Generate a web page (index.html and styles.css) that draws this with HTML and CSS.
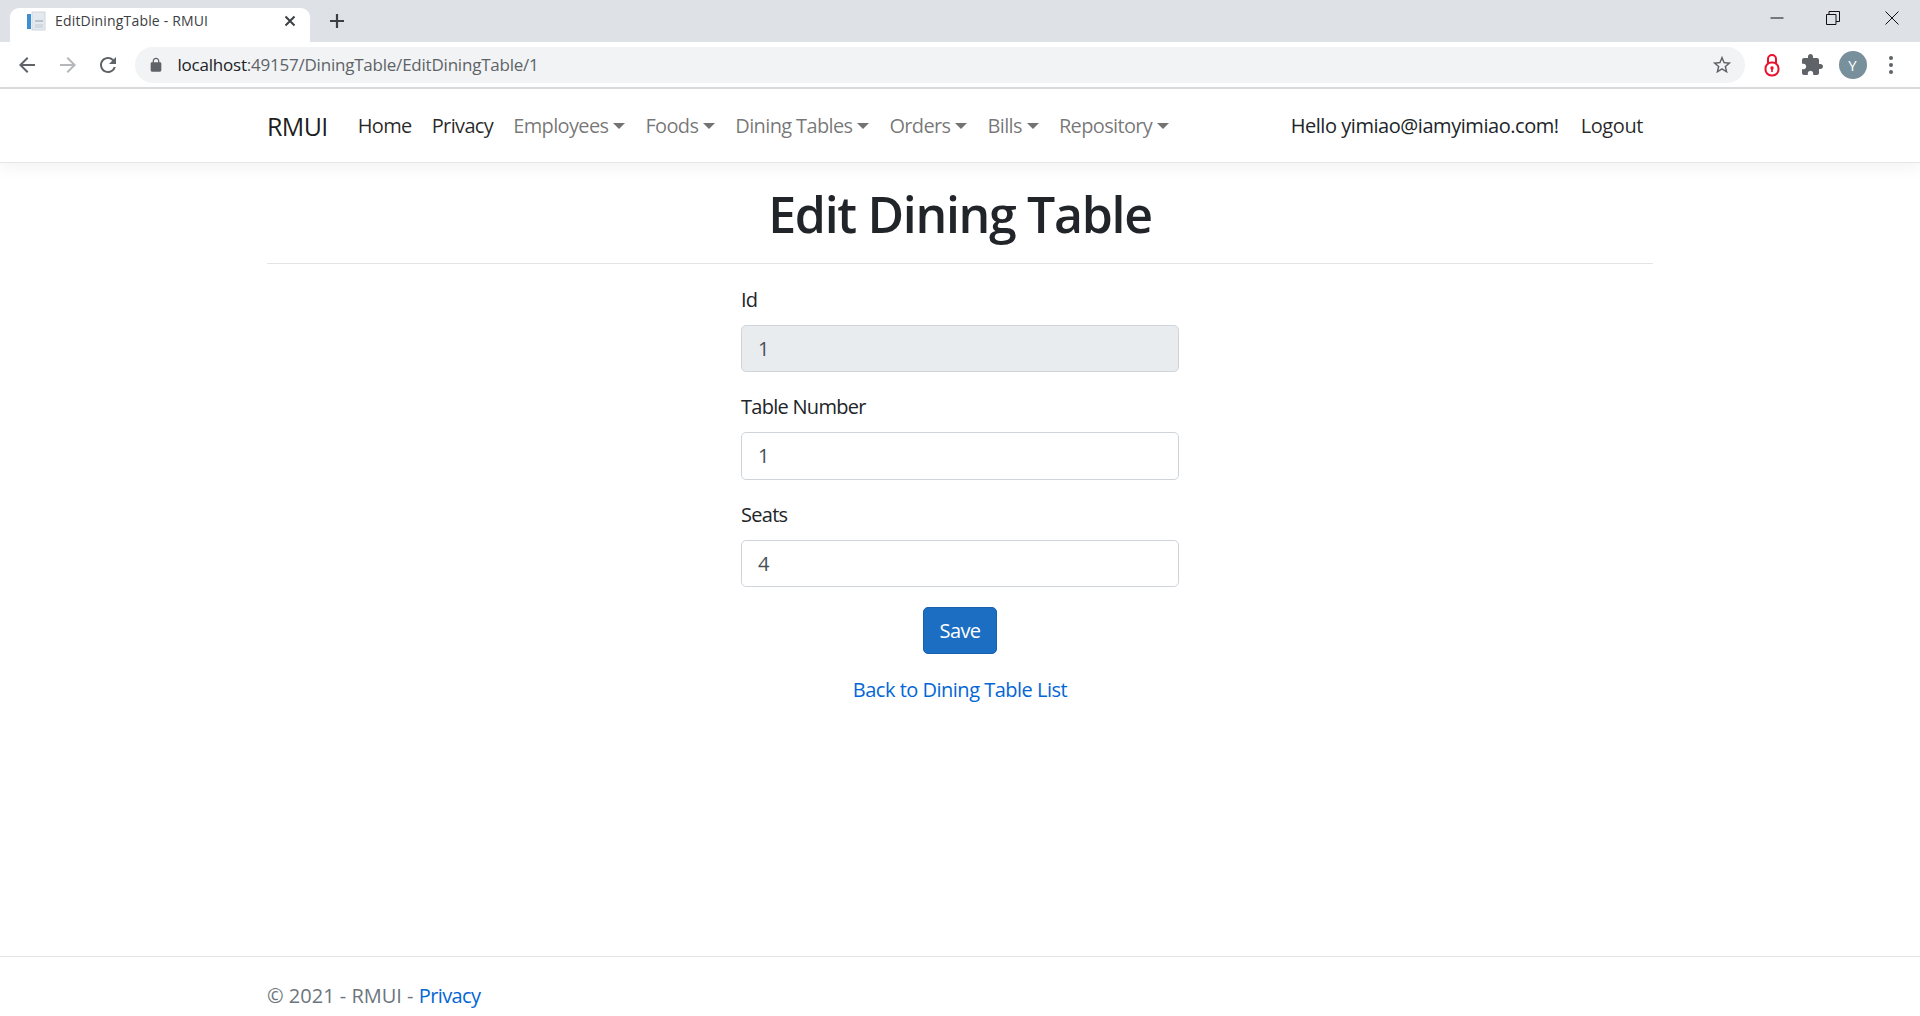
FILE: index.html
```html
<!DOCTYPE html>
<html lang="en">
<head>
<meta charset="utf-8">
<title>EditDiningTable - RMUI</title>
<link rel="stylesheet" href="styles.css">
</head>
<body>
<div class="browser">
  <div class="tabstrip">
    <div class="tab">
      <svg class="favicon" width="20" height="20" viewBox="0 0 20 20"><rect x="6" y="1" width="13" height="18" fill="#e4e9ef" stroke="#cfd6de"/><rect x="9" y="9" width="8" height="2" fill="#b9c3cd"/><rect x="9" y="13" width="8" height="4" fill="#d2d9e0"/><rect x="1" y="3" width="4" height="15" fill="#3d8fd1"/></svg>
      <span class="tab-title">EditDiningTable - RMUI</span>
      <svg class="tab-close" width="14" height="14" viewBox="0 0 14 14"><path d="M2.5 2.5l9 9M11.500 2.500l-9 9" stroke="#3c4043" stroke-width="2" fill="none"/></svg>
    </div>
    <svg class="newtab" width="20" height="20" viewBox="0 0 20 20"><path d="M10 3v14M3 10h14" stroke="#3c4043" stroke-width="2.200" fill="none"/></svg>
    <div class="winctl">
      <svg width="16" height="16" viewBox="0 0 16 16"><path d="M1.500 8h13" stroke="#111" stroke-width="1" fill="none"/></svg>
      <svg width="16" height="16" viewBox="0 0 16 16"><path d="M1.500 4.500h9.500v10h-9.500zM4 4.500v-3h10.500v10h-3.500" stroke="#111" stroke-width="1" fill="none"/></svg>
      <svg class="win-close" width="16" height="16" viewBox="0 0 16 16"><path d="M1.500 1.500l13 13M14.500 1.500l-13 13" stroke="#111" stroke-width="1" fill="none"/></svg>
    </div>
  </div>
  <div class="toolbar">
    <svg class="tool" width="24" height="24" viewBox="0 0 24 24"><path fill="#5f6368" d="M20 11H7.830l5.590-5.590L12 4l-8 8 8 8 1.410-1.410L7.830 13H20v-2z"/></svg>
    <svg class="tool" width="24" height="24" viewBox="0 0 24 24"><path fill="#b5b8bb" d="M4 11h12.170l-5.590-5.590L12 4l8 8-8 8-1.410-1.410L16.170 13H4v-2z"/></svg>
    <svg class="tool" width="24" height="24" viewBox="0 0 24 24"><path fill="#5f6368" d="M17.650 6.350A7.958 7.958 0 0 0 12 4c-4.420 0-7.990 3.580-7.990 8s3.570 8 7.990 8c3.730 0 6.840-2.550 7.730-6h-2.080A5.990 5.990 0 0 1 12 18c-3.310 0-6-2.690-6-6s2.690-6 6-6c1.660 0 3.140.690 4.220 1.780L13 11h7V4l-2.350 2.350z"/></svg>
    <div class="omnibox">
      <svg width="16" height="16" viewBox="0 0 24 24"><path fill="#5f6368" d="M18 8h-1V6c0-2.760-2.240-5-5-5S7 3.240 7 6v2H6c-1.100 0-2 .9-2 2v10c0 1.100.9 2 2 2h12c1.100 0 2-.9 2-2V10c0-1.100-.9-2-2-2zm-2.900 0H8.900V6c0-1.710 1.390-3.100 3.100-3.100 1.710 0 3.100 1.390 3.100 3.100v2z"/></svg>
      <span class="url"><span class="url-host">localhost</span>:49157/DiningTable/EditDiningTable/1</span>
      <svg class="star" width="22" height="22" viewBox="0 0 24 24"><path fill="#5f6368" d="M22 9.240l-7.190-.62L12 2 9.190 8.630 2 9.240l5.460 4.730L5.820 21 12 17.270 18.180 21l-1.630-7.030L22 9.240zM12 15.400l-3.760 2.270 1-4.280-3.320-2.880 4.380-.38L12 6.100l1.710 4.040 4.380.38-3.320 2.880 1 4.280L12 15.400z"/></svg>
    </div>
    <div class="ext">
      <svg width="24" height="24" viewBox="0 0 24 24"><rect x="5.500" y="9.500" width="13" height="13" rx="6" fill="none" stroke="#e8112d" stroke-width="2"/><path d="M8 10V6a4 4 0 0 1 8 0v4" fill="none" stroke="#e8112d" stroke-width="2"/><circle cx="12" cy="15" r="1.700" fill="#e8112d"/><rect x="11.200" y="15" width="1.600" height="4" fill="#e8112d"/></svg>
      <svg width="24" height="24" viewBox="0 0 24 24"><path fill="#5f6368" d="M20.500 11H19V7c0-1.100-.9-2-2-2h-4V3.500C13 2.120 11.880 1 10.500 1S8 2.120 8 3.500V5H4c-1.100 0-1.990.9-1.990 2v3.800H3.500c1.490 0 2.700 1.210 2.700 2.700s-1.210 2.700-2.700 2.700H2V20c0 1.100.9 2 2 2h3.800v-1.500c0-1.490 1.210-2.700 2.700-2.700 1.490 0 2.700 1.210 2.700 2.700V22H17c1.100 0 2-.9 2-2v-4h1.500c1.380 0 2.500-1.120 2.500-2.500S21.880 11 20.500 11z"/></svg>
      <span class="avatar">Y</span>
      <svg class="dots" width="6" height="20" viewBox="0 0 6 20"><circle cx="3" cy="3" r="2" fill="#5f6368"/><circle cx="3" cy="10" r="2" fill="#5f6368"/><circle cx="3" cy="17" r="2" fill="#5f6368"/></svg>
    </div>
  </div>
</div>

<nav class="navbar">
  <a class="brand" href="#">RMUI</a>
  <ul class="nav-main">
    <li><a class="nav-link dark" href="#">Home</a></li>
    <li><a class="nav-link dark" href="#">Privacy</a></li>
    <li><a class="nav-link caret" href="#">Employees</a></li>
    <li><a class="nav-link caret" href="#">Foods</a></li>
    <li><a class="nav-link caret" href="#">Dining Tables</a></li>
    <li><a class="nav-link caret" href="#">Orders</a></li>
    <li><a class="nav-link caret" href="#">Bills</a></li>
    <li><a class="nav-link caret" href="#">Repository</a></li>
  </ul>
  <div class="nav-user">
    <span class="hello">Hello yimiao@iamyimiao.com!</span>
    <a class="nav-link dark logout" href="#">Logout</a>
  </div>
</nav>

<main class="content">
  <h1 class="title">Edit Dining Table</h1>
  <hr class="rule">
  <form class="form">
    <div class="group">
      <label class="label" for="id">Id</label>
      <input class="input" id="id" value="1" disabled>
    </div>
    <div class="group">
      <label class="label" for="num">Table Number</label>
      <input class="input" id="num" value="1">
    </div>
    <div class="group">
      <label class="label" for="seats">Seats</label>
      <input class="input" id="seats" value="4">
    </div>
    <button class="btn" type="button">Save</button>
    <a class="back" href="#">Back to Dining Table List</a>
  </form>
</main>

<footer class="footer">
  <span>© 2021 - RMUI - <a class="footer-link" href="#">Privacy</a></span>
</footer>
</body>
</html>
```
FILE: styles.css
```css
* { box-sizing: border-box; }
html, body { margin: 0; height: 1016px; overflow: hidden; }
body {
  display: flex;
  flex-direction: column;
  background: #fff;
  font-family: "Open Sans", "Noto Sans", sans-serif;
  font-size: 20px;
  line-height: 30px;
  color: #212529;
  letter-spacing: -0.6px;
}
a { text-decoration: none; }

/* browser chrome */
.browser { height: 89px; flex: none; border-bottom: 2px solid #dadce0; letter-spacing: 0; }
.tabstrip { height: 42px; background: #dee1e6; display: flex; align-items: flex-end; padding-left: 10px; }
.tab { width: 300px; height: 34px; background: #fff; border-radius: 9px 9px 0 0; display: flex; align-items: center; padding: 0 13px 8px 16px; }
.favicon { flex: none; }
.tab-title { margin-left: 9px; font-family: "Open Sans", sans-serif; font-size: 14px; line-height: 20px; letter-spacing: 0.17px; color: #3c4043; flex: 1; }
.tab-close { flex: none; }
.newtab { margin: 0 0 11px 17px; flex: none; }
.winctl { margin-left: auto; align-self: stretch; display: flex; gap: 40px; align-items: flex-start; padding: 10px 20px 0 0; }
.win-close { margin-left: 3px; }
.toolbar { height: 45px; display: flex; align-items: center; padding: 0 7px 0 15px; }
.tool { flex: none; margin-right: 16.5px; }
.omnibox { width: 1610px; margin-left: -2px; height: 36px; background: #f1f3f4; border-radius: 18px; display: flex; align-items: center; padding: 0 12px 0 13px; flex: none; }
.url { margin-left: 14px; font-size: 17px; letter-spacing: -0.22px; color: #5f6368; flex: 1; line-height: 24px; }
.url-host { color: #202124; }
.ext { display: flex; align-items: center; margin-left: 15px; gap: 16px; flex: none; }
.avatar { width: 28px; height: 28px; border-radius: 50%; background: #78909c; color: #fff; font-size: 15px; line-height: 28px; text-align: center; letter-spacing: 0; margin-left: -1px; }
.dots { margin-left: 5.5px; }

/* navbar */
.navbar {
  height: 74px;
  flex: none;
  display: flex;
  align-items: center;
  padding: 0 267px;
  border-bottom: 1px solid #e4e6ea;
  box-shadow: 0 5px 15px rgba(0, 0, 0, .05);
  background: #fff;
}
.brand { font-size: 25px; line-height: 38px; color: rgba(0, 0, 0, .9); margin-right: 20px; }
.nav-main { list-style: none; display: flex; margin: 0; padding: 0; }
.nav-link { display: block; padding: 0 10px; color: rgba(0, 0, 0, .55); white-space: nowrap; letter-spacing: -0.64px; }
.nav-link.dark { color: rgba(0, 0, 0, .85); }
.caret::after {
  content: "";
  display: inline-block;
  margin-left: 5px;
  vertical-align: 4px;
  border-top: 6px solid;
  border-left: 6px solid transparent;
  border-right: 6px solid transparent;
}
.nav-user { margin-left: auto; display: flex; align-items: center; }
.hello { color: #212529; margin-right: 12px; letter-spacing: -0.45px; }
.logout { letter-spacing: -0.4px; }

/* content */
.content { flex: 1; padding: 0 267px; }
.title { margin: 18px 0 0; text-align: center; font-size: 50px; line-height: 66px; font-weight: 600; letter-spacing: -1.3px; }
.rule { margin: 16px 0 0; border: 0; border-top: 1px solid #e5e5e5; height: 1px; }
.form { width: 438px; margin: 20.5px auto 0; display: flex; flex-direction: column; }
.group { display: flex; flex-direction: column; margin-bottom: 20px; }
.label { height: 30px; margin-bottom: 10px; letter-spacing: -0.72px; }
.input {
  height: 47.5px;
  padding: 7.5px 16px;
  font: inherit;
  letter-spacing: inherit;
  color: #495057;
  background: #fff;
  border: 1.25px solid #ced4da;
  border-radius: 5px;
  width: 100%;
}
.input:disabled { background: #e9ecef; opacity: 1; color: #495057; }
.btn {
  align-self: center;
  width: 74px;
  height: 47px;
  padding: 0;
  font: inherit;
  letter-spacing: inherit;
  color: #fff;
  background: #1b6ec2;
  border: 1.25px solid #1861ac;
  border-radius: 5px;
}
.back { align-self: center; margin-top: 21px; color: #0366d6; letter-spacing: -0.5px; }

/* footer */
.footer { height: 60px; flex: none; border-top: 1px solid #e5e5e5; padding: 24px 267px 0; color: #6c757d; letter-spacing: 0; }
.footer-link { color: #0366d6; letter-spacing: -0.6px; }
```
